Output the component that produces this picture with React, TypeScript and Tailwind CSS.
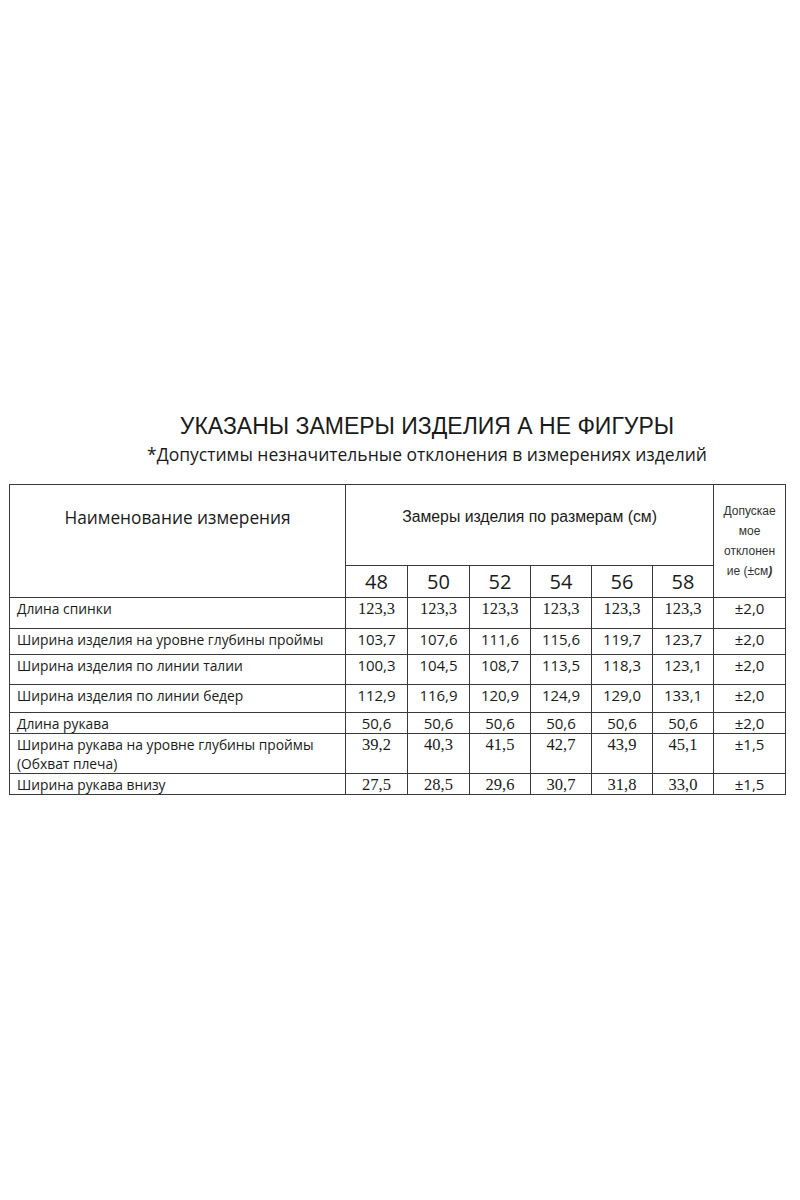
const sizes = ["48", "50", "52", "54", "56", "58"];

type Row = {
  label: string[];
  values: string[];
  tol: string;
  serif: boolean;
  h: string;
};

const rows: Row[] = [
  { label: ["Длина спинки"], values: ["123,3", "123,3", "123,3", "123,3", "123,3", "123,3"], tol: "±2,0", serif: true, h: "h-[31px]" },
  { label: ["Ширина изделия на уровне глубины проймы"], values: ["103,7", "107,6", "111,6", "115,6", "119,7", "123,7"], tol: "±2,0", serif: false, h: "h-[26px]" },
  { label: ["Ширина изделия по линии талии"], values: ["100,3", "104,5", "108,7", "113,5", "118,3", "123,1"], tol: "±2,0", serif: false, h: "h-[30px]" },
  { label: ["Ширина изделия по линии бедер"], values: ["112,9", "116,9", "120,9", "124,9", "129,0", "133,1"], tol: "±2,0", serif: false, h: "h-[28px]" },
  { label: ["Длина рукава"], values: ["50,6", "50,6", "50,6", "50,6", "50,6", "50,6"], tol: "±2,0", serif: false, h: "h-[21px]" },
  { label: ["Ширина рукава на уровне глубины проймы", "(Обхват плеча)"], values: ["39,2", "40,3", "41,5", "42,7", "43,9", "45,1"], tol: "±1,5", serif: true, h: "h-[38px]" },
  { label: ["Ширина рукава внизу"], values: ["27,5", "28,5", "29,6", "30,7", "31,8", "33,0"], tol: "±1,5", serif: true, h: "h-[20px]" },
];

const cell = "border border-[#3a3a3a] p-0";

export default function App() {
  return (
    <div className="w-[800px] h-[1200px] bg-white text-[#1a1a1a] pt-[413px]">
      {/* heading */}
      <div className="pl-[54px] text-center">
        <h1 className="font-['Liberation_Sans',Arial,sans-serif] text-[23px] leading-[27px] font-normal">
          УКАЗАНЫ ЗАМЕРЫ ИЗДЕЛИЯ А НЕ ФИГУРЫ
        </h1>
        <p className="mt-[2px] font-['Open_Sans',sans-serif] text-[17.5px] leading-[24px]">
          *Допустимы незначительные отклонения в измерениях изделий
        </p>
      </div>

      {/* size table */}
      <table className="mt-[18px] ml-[9px] w-[776px] table-fixed border-collapse">
        <colgroup>
          <col className="w-[336px]" />
          <col className="w-[62px]" />
          <col className="w-[62px]" />
          <col className="w-[61px]" />
          <col className="w-[61px]" />
          <col className="w-[61px]" />
          <col className="w-[61px]" />
          <col className="w-[72px]" />
        </colgroup>
        <thead>
          <tr className="h-[81px]">
            <th
              rowSpan={2}
              className={`${cell} align-top pt-[21px] text-center font-normal font-['Open_Sans',sans-serif] text-[17.3px] leading-[23px]`}
            >
              Наименование измерения
            </th>
            <th
              colSpan={6}
              className={`${cell} align-top pt-[22px] text-center font-normal font-['Liberation_Sans',Arial,sans-serif] text-[15.8px] leading-[20px]`}
            >
              Замеры изделия по размерам (см)
            </th>
            <th
              rowSpan={2}
              className={`${cell} align-middle text-center font-normal font-['Liberation_Sans',Arial,sans-serif] text-[12px] leading-[20px] text-[#333]`}
            >
              Допускае
              <br />
              мое
              <br />
              отклонен
              <br />
              ие (±см<span className="italic font-bold">)</span>
            </th>
          </tr>
          <tr className="h-[32px]">
            {sizes.map((s) => (
              <th
                key={s}
                className={`${cell} text-center align-middle font-normal font-['Open_Sans',sans-serif] text-[20px] leading-[24px]`}
              >
                {s}
              </th>
            ))}
          </tr>
        </thead>
        <tbody>
          {rows.map((r, i) => (
            <tr key={i} className={r.h}>
              <td className={`${cell} align-top pl-[7px] pt-[1px] font-['Open_Sans',sans-serif] text-[13.8px] leading-[19px]`}>
                {r.label.map((l, j) => (
                  <div key={j}>{l}</div>
                ))}
              </td>
              {r.values.map((v, j) => (
                <td
                  key={j}
                  className={`${cell} align-top text-center pt-[1px] leading-[19px] ${
                    r.serif
                      ? "font-['Liberation_Serif',serif] text-[16.5px]"
                      : "font-['Open_Sans',sans-serif] text-[15px]"
                  }`}
                >
                  {v}
                </td>
              ))}
              <td className={`${cell} align-top text-center pt-[1px] font-['Open_Sans',sans-serif] text-[15px] leading-[19px]`}>
                {r.tol}
              </td>
            </tr>
          ))}
        </tbody>
      </table>
    </div>
  );
}
